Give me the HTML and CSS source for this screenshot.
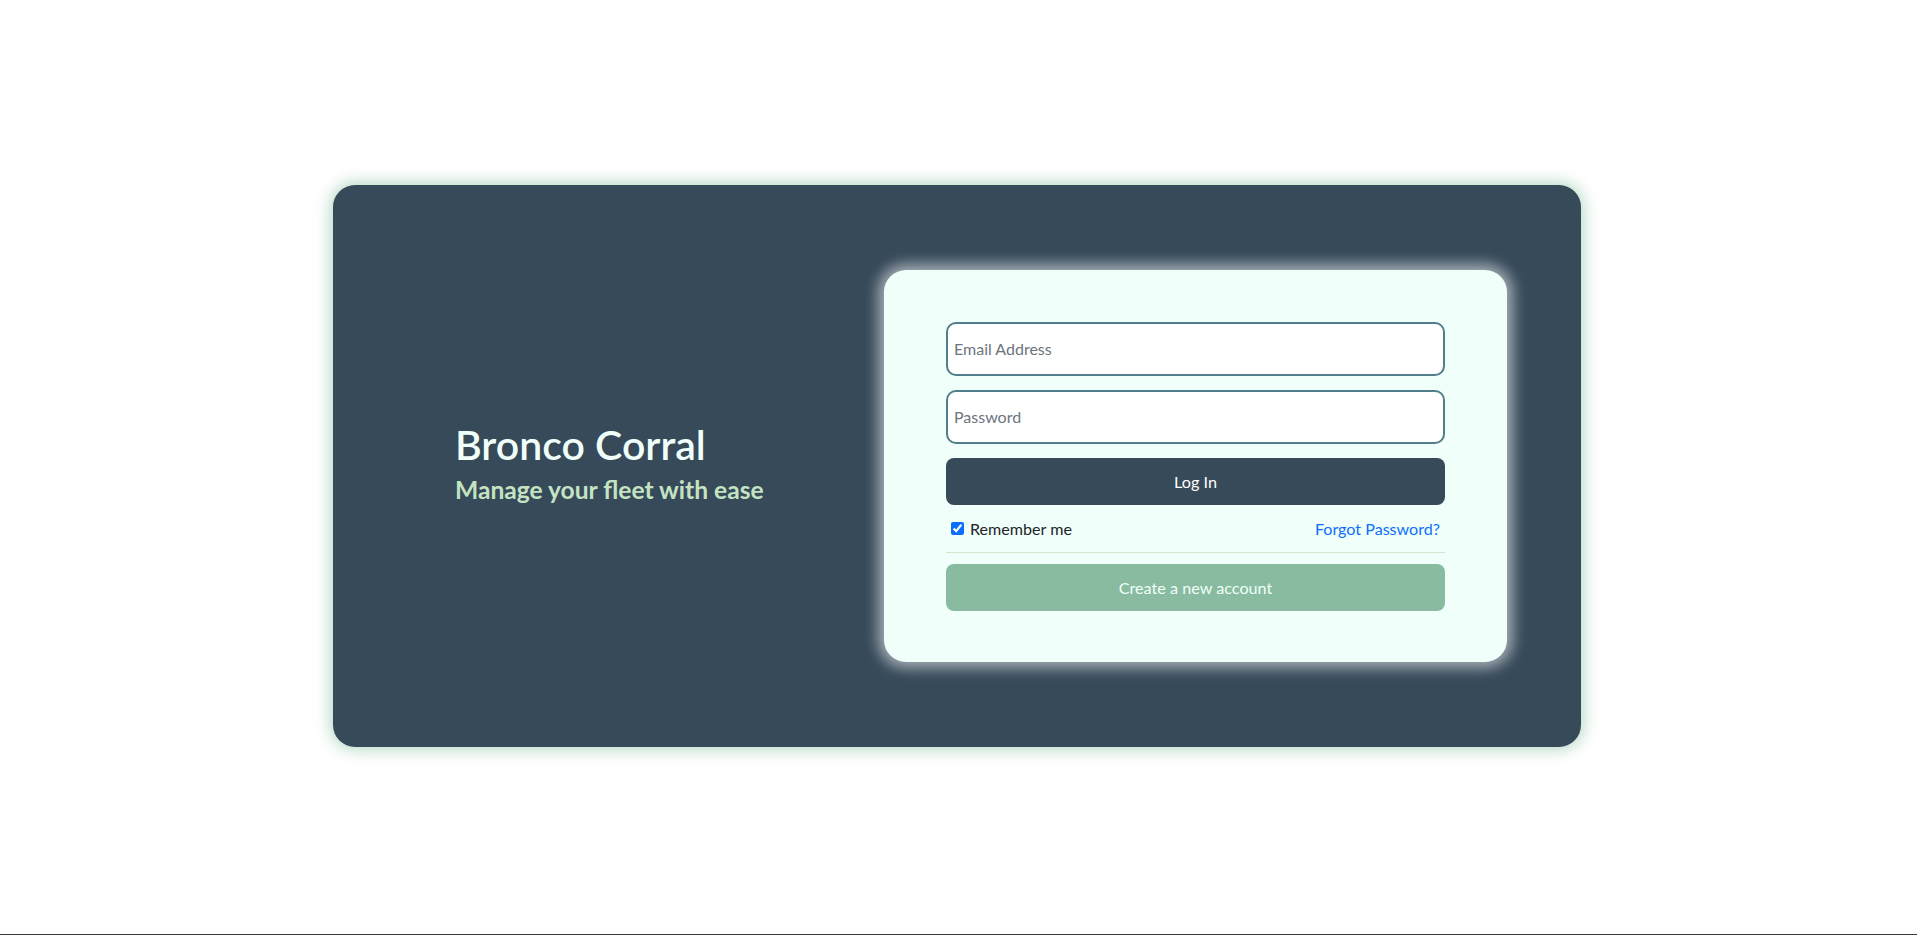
FILE: index.html
```html
<!DOCTYPE html>
<html lang="en">
<head>
<meta charset="utf-8">
<title>Bronco Corral - Log In</title>
<link rel="stylesheet" href="styles.css">
</head>
<body>
<main class="stage">
  <section class="card">
    <div class="brand">
      <h1 class="brand-title">Bronco Corral</h1>
      <h4 class="brand-sub">Manage your fleet with ease</h4>
    </div>
    <form class="panel">
      <input class="field" type="email" placeholder="Email Address">
      <input class="field" type="password" placeholder="Password">
      <button class="btn btn-login" type="button">Log In</button>
      <div class="row">
        <label class="remember"><input type="checkbox" checked> Remember me</label>
        <a class="forgot" href="#">Forgot Password?</a>
      </div>
      <hr class="divider">
      <button class="btn btn-create" type="button">Create a new account</button>
    </form>
  </section>
</main>
<div class="bottom-line"></div>
</body>
</html>
```
FILE: styles.css
```css
* { box-sizing: border-box; }
html, body { margin: 0; padding: 0; }
body {
  background: #ffffff;
  font-family: "Segoe UI", Lato, "Noto Sans", sans-serif;
  color: #212529;
  height: 935px;
  overflow: hidden;
  display: flex;
  flex-direction: column;
}
.stage {
  height: 934px;
  display: flex;
  align-items: center;
  justify-content: center;
  padding: 0 3px 3px 0;
}
.card {
  width: 1248px;
  height: 562px;
  background: #374a5a;
  border-radius: 22px;
  box-shadow: 0 0 16px 2px rgba(150, 200, 170, 0.75);
  display: flex;
  align-items: center;
  padding: 0 74px 0 122px;
}
.brand { flex: 1; margin-top: -6px; }
.brand-title {
  margin: 0 0 6px;
  font-size: 41px;
  line-height: 48px;
  font-weight: 600;
  color: #f0fff9;
}
.brand-sub {
  margin: 0;
  font-size: 24.6px;
  line-height: 29px;
  font-weight: 700;
  color: #c4e3c2;
}
.panel {
  width: 623px;
  background: #f0fff9;
  border-radius: 22px;
  padding: 52px 62px 51px;
  box-shadow: 0 0 14px 6px rgba(255, 255, 255, 0.55);
  display: flex;
  flex-direction: column;
}
.field {
  height: 54px;
  border: 2px solid #507f8b;
  border-radius: 10px;
  background: #ffffff;
  padding: 0 6px;
  font-family: inherit;
  font-size: 16px;
  color: #212529;
  margin-bottom: 14px;
}
.field::placeholder { color: #6c757d; }
.btn {
  height: 47px;
  border: none;
  border-radius: 8px;
  font-family: inherit;
  font-size: 16.2px;
  cursor: pointer;
}
.btn-login {
  background: #374a5a;
  color: #ffffff;
}
.row {
  margin-top: 12px;
  height: 24px;
  display: flex;
  align-items: center;
  justify-content: space-between;
  font-size: 16.1px;
}
.remember {
  display: flex;
  align-items: center;
  gap: 6px;
  padding-left: 5px;
  color: #212529;
}
.remember input {
  margin: 0;
  width: 13px;
  height: 13px;
  accent-color: #0d6efd;
}
.forgot {
  color: #0d6efd;
  text-decoration: none;
  padding-right: 5px;
}
.divider {
  margin: 11px 0;
  border: none;
  border-top: 1px solid #cfe8cc;
}
.btn-create {
  background: #88bba0;
  color: #f0fff9;
}
.bottom-line {
  height: 1px;
  background: #3a3a3a;
}
```
